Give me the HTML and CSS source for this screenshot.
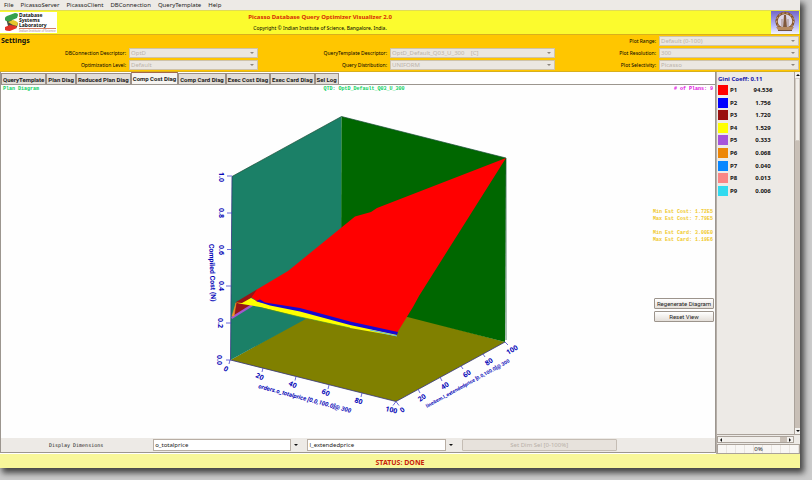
FILE: index.html
```html
<!DOCTYPE html>
<html lang="en">
<head>
<meta charset="utf-8">
<title>Picasso Database Query Optimizer Visualizer</title>
<link rel="stylesheet" href="styles.css">
</head>
<body>
<div class="window">
  <nav class="menubar">
    <button>File</button><button>PicassoServer</button><button>PicassoClient</button><button>DBConnection</button><button>QueryTemplate</button><button>Help</button>
  </nav>
  <header class="banner">
    <div class="lab">
      <svg class="lab-mark" viewBox="0 0 14 20" aria-hidden="true">
        <path d="M1 6L6 4 7 9 13 11 12 15 6 16 3 14Z" fill="#4c4a3c"/>
        <path d="M0 6Q0 5 2 4L10 1Q13 1 13 3L12 6 5 9Q1 10 0 8Z" fill="#35a04c"/>
        <path d="M3 10L8 8Q12 9 13 11L12 14 8 13Z" fill="#e6c72e"/>
        <path d="M0 15L5 13 11 14 12 16 5 19Q1 19 0 18Z" fill="#e23228"/>
      </svg>
      <div class="lab-text"><b>Database</b><b>Systems</b><b>Laboratory</b><span>Indian Institute of Science</span></div>
    </div>
    <div class="titles">
      <h1>Picasso Database Query Optimizer Visualizer 2.0</h1>
      <p>Copyright © Indian Institute of Science, Bangalore, India.</p>
    </div>
    <svg class="crest" viewBox="0 0 28 23" aria-hidden="true">
      <defs><linearGradient id="sky" x1="0" y1="0" x2="0" y2="1"><stop offset="0" stop-color="#7266c8"/><stop offset=".6" stop-color="#b4b4f4"/><stop offset="1" stop-color="#f4f4ff"/></linearGradient></defs>
      <rect width="28" height="23" fill="url(#sky)"/>
      <ellipse cx="14" cy="10" rx="8.500" ry="8" fill="#ddd6e8" stroke="#87572f" stroke-width="2.400"/>
      <ellipse cx="14" cy="10" rx="8.500" ry="8" fill="none" stroke="#d6b27e" stroke-dasharray="2 2"/>
      <path d="M13 4h2l1 13h-4z" fill="#80583c"/><path d="M11 8v8M17 8v8" stroke="#a58b83"/>
      <path d="M5 16h18l-2 3H7z" fill="#b78b62"/><path d="M7 19.500h14" stroke="#735240"/>
    </svg>
  </header>
  <section class="settings">
    <h2>Settings</h2>
    <label class="c5" for="range">Plot Range:</label><span class="combo c6"><select id="range" disabled><option>Default (0-100)</option></select></span>
    <label class="c1" for="conn">DBConnection Descriptor:</label><span class="combo"><select id="conn" disabled><option>OptD</option></select></span>
    <label for="qtd">QueryTemplate Descriptor:</label><span class="combo"><select id="qtd" disabled><option>OptD_Default_Q03_U_300 &nbsp;&nbsp; [C]</option></select></span>
    <label for="res">Plot Resolution:</label><span class="combo"><select id="res" disabled><option>300</option></select></span>
    <label class="c1" for="opt">Optimization Level:</label><span class="combo"><select id="opt" disabled><option>Default</option></select></span>
    <label for="dist">Query Distribution:</label><span class="combo"><select id="dist" disabled><option>UNIFORM</option></select></span>
    <label for="sel">Plot Selectivity:</label><span class="combo"><select id="sel" disabled><option>Picasso</option></select></span>
  </section>
  <div class="body">
    <main class="work">
      <div class="tabs" role="tablist">
        <button role="tab">QueryTemplate</button><button role="tab">Plan Diag</button><button role="tab">Reduced Plan Diag</button><button role="tab" class="active" aria-selected="true">Comp Cost Diag</button><button role="tab">Comp Card Diag</button><button role="tab">Exec Cost Diag</button><button role="tab">Exec Card Diag</button><button role="tab">Sel Log</button>
      </div>
      <div class="canvas">
        <div class="caption"><span class="green">Plan Diagram</span><span class="green">QTD: OptD_Default_Q03_U_300</span><span class="plans"># of Plans: 9</span></div>
        <div class="plot">
        <svg class="chart" viewBox="200 100 330 320" role="img" aria-label="Compiled cost surface">
          <path d="M230.500 360L341 298 505 342 396 401.500Z" fill="#808000"/>
          <path d="M232 176.500L341.500 116.500V299.500L230.500 360Z" fill="#1b8067"/>
          <path d="M341.500 116.500L506 158 505 342 341 300Z" fill="#006700"/>
          <path d="M232 176.500L341.500 116.500 506 158V340" fill="none" stroke="#174d35" stroke-width=".7"/>
          <path d="M232 176.500L230.500 360 396 401.500 505 342" fill="none" stroke="#33337e" stroke-width=".8"/>
          <path d="M506 158L377 208 371 212 355 216.500 288 271 256 290 251 297 258 302 265 303 300 309 350 323 397 333 413 307 419 296Z" fill="#ff0000"/>
          <path d="M236 302L257 289.500 251 298 243 304 252 305 234 316Z" fill="#9a1414"/>
          <path d="M231 317L251 304.500 253 306 232 319Z" fill="#a357cf"/>
          <path d="M236 303L232 316 234 316Z" fill="#ee9325" stroke="#ee9325" stroke-width=".6"/>
          <path d="M235 302.500L242 303 251 298 258 302 270 304 300 310 350 324 397 334 396 336 350 328 300 317 260 307 242 304Z" fill="#ffff00"/>
          <path d="M260 307.500L300 317 350 328" stroke="#4f8c24" stroke-width=".7" fill="none"/>
          <path d="M256 301L260 299.500 265 302.500 300 308 350 321.500 398 332 397 335 350 325 300 311.500 270 305.500 262 303Z" fill="#1608d3"/>
          <path d="M370 330L397 336" stroke="#65bce7" fill="none"/>
          <g stroke="#4545d0" stroke-width=".8"><path d="M227 176h5M227 213h5M227 249.500h5M226 286h5M226 323h5M226 360h5M230 360l-1 4M263 368l-1 4M296 376.500l-1 4M329 385l-1 4M362 393l-1 4M396 401.500l-3 4M396 401.500l3 4M418 389l2 4M440 377l2 4M461 366l2 3M483 354l2 3M505 342l3 3"/></g>
          <g class="ticks">
            <text transform="translate(219 172) rotate(90)">1.0</text><text transform="translate(219 208) rotate(90)">0.8</text><text transform="translate(219 245) rotate(90)">0.6</text><text transform="translate(219 281) rotate(90)">0.4</text><text transform="translate(218 318) rotate(90)">0.2</text><text transform="translate(217 355) rotate(90)">0.0</text>
            <text transform="translate(223 370) rotate(30)">0</text><text transform="translate(255 377) rotate(25)">20</text><text transform="translate(288 385) rotate(25)">40</text><text transform="translate(321 393) rotate(25)">60</text><text transform="translate(354 402) rotate(20)">80</text><text transform="translate(385 411) rotate(12)">100</text>
            <text transform="translate(402 413) rotate(-35)">0</text><text transform="translate(420 402) rotate(-35)">20</text><text transform="translate(443 390) rotate(-35)">40</text><text transform="translate(465 378) rotate(-35)">60</text><text transform="translate(487 366) rotate(-35)">80</text><text transform="translate(508 355) rotate(-30)">100</text>
            <text class="axis tall" transform="translate(209 244) rotate(88)">Compiled Cost (N)</text>
            <text class="axis low" transform="translate(258 388) rotate(15)">orders.o_totalprice [0.0,100.0]@ 300</text>
            <text class="axis small" transform="translate(427 408) rotate(-29)">lineitem.l_extendedprice [0.0,100.0]@ 300</text>
          </g>
        </svg>
        <aside class="facts">
          <pre>Min Est Cost: 1.72E5
Max Est Cost: 7.79E5

Min Est Card: 3.00E0
Max Est Card: 1.19E6</pre>
          <button>Regenerate Diagram</button>
          <button>Reset View</button>
        </aside>
        </div>
      </div>
      <div class="dims">
        <span class="dims-label">Display Dimensions</span>
        <span class="combo"><select aria-label="First dimension"><option>o_totalprice</option></select></span>
        <span class="combo"><select aria-label="Second dimension"><option>l_extendedprice</option></select></span>
        <button disabled>Set Dim Sel [0-100%]</button>
      </div>
    </main>
    <aside class="side">
      <div class="legend">
        <div class="legend-list">
          <h3>Gini Coeff: 0.11</h3>
          <table>
            <tr><td><i class="p1"></i></td><td>P1</td><td>94.536</td></tr>
            <tr><td><i class="p2"></i></td><td>P2</td><td>1.756</td></tr>
            <tr><td><i class="p3"></i></td><td>P3</td><td>1.720</td></tr>
            <tr><td><i class="p4"></i></td><td>P4</td><td>1.529</td></tr>
            <tr><td><i class="p5"></i></td><td>P5</td><td>0.333</td></tr>
            <tr><td><i class="p6"></i></td><td>P6</td><td>0.068</td></tr>
            <tr><td><i class="p7"></i></td><td>P7</td><td>0.040</td></tr>
            <tr><td><i class="p8"></i></td><td>P8</td><td>0.013</td></tr>
            <tr><td><i class="p9"></i></td><td>P9</td><td>0.006</td></tr>
          </table>
        </div>
        <div class="vscroll"><b class="up"></b><i></i><b class="down"></b></div>
      </div>
      <div class="hscroll"><b class="left"></b><i></i><b class="right"></b></div>
      <div class="progress">0%</div>
    </aside>
  </div>
  <footer class="status">STATUS: DONE</footer>
</div>
</body>
</html>
```
FILE: styles.css
```css
* { box-sizing: border-box; }
body {
  margin: 0;
  height: 100vh;
  padding: 0 12px 12px 0;
  background: #cbcbcb;
  font: 6px/8px "Noto Sans", sans-serif;
  color: #222;
  overflow: hidden;
}
button, select { font: inherit; color: inherit; margin: 0; }
h1, h2, h3, p, pre { margin: 0; }

.window {
  display: flex;
  flex-direction: column;
  height: 100%;
  background: #edeae6;
  box-shadow: 3px 4px 6px 1px #444;
}

.menubar { display: flex; flex: 0 0 10px; gap: 7px; padding: 1px 4px; }
.menubar button { border: 0; padding: 0; background: none; line-height: 8px; }

.banner {
  display: grid;
  flex: 0 0 24px;
  grid-template-columns: 57px 526fr 188fr 28px;
  background: #fbfb2e;
  border-top: 1px solid #e0dc55;
  padding-right: 1px;
}
.lab { display: flex; margin-top: 1px; height: 21px; background: #fff; padding-left: 5px; }
.lab-mark { width: 14px; height: 20px; }
.lab-text { display: flex; flex-direction: column; color: #111; padding-top: 1px; white-space: nowrap; }
.lab-text b { font-size: 5px; line-height: 5px; }
.lab-text span { border-top: 1px solid #d37f68; font-size: 3px; line-height: 4px; color: #a88; }
.titles { text-align: center; }
.titles h1 { font-size: 6px; line-height: 12px; color: #d62b05; }
.titles p { font-size: 5px; line-height: 11px; color: #000; }
.crest { grid-column: 4; width: 28px; height: 23px; }

.settings {
  display: grid;
  flex: 0 0 38px;
  grid-template-columns: 128fr 129fr 132fr 165fr 104fr 140fr;
  grid-auto-rows: 10px;
  row-gap: 2px;
  padding: 1px 1px 0;
  background: #ffc600;
  border: solid #d9b01c;
  border-width: 1px 0;
}
.settings h2 { font: bold 7px/10px "Noto Sans", sans-serif; color: #111; }
.settings label { text-align: right; padding-right: 3px; font-size: 5px; line-height: 10px; color: #000; white-space: nowrap; }
.settings .c5 { grid-column: 5; }
.settings .c1 { grid-column: 1; }

.combo { position: relative; display: block; min-width: 0; }
.combo select {
  appearance: none;
  display: block;
  width: 100%;
  height: 100%;
  padding: 0 1px;
  border: 1px solid #b8aea4;
  border-radius: 0;
  background: #ebe7e1;
  line-height: 8px;
}
.combo select:disabled { color: #bcb4aa; opacity: 1; border-color: #cfc3a8; }
.combo::after {
  content: "";
  position: absolute;
  right: 4px;
  top: 4px;
  border: 2px solid transparent;
  border-top-color: #8d857c;
  border-bottom: 0;
}

.body { display: flex; flex: 1 1 0; min-height: 0; background: #fff; }
.work { display: flex; flex: 1 1 0; flex-direction: column; min-width: 0; border: solid #9c968f; border-width: 0 1px 1px; margin-bottom: 1px; }

.tabs { display: flex; flex: 0 0 13px; align-items: flex-end; border-bottom: 1px solid #9c968f; }
.tabs button {
  height: 11px;
  padding: 0 1px;
  border: 1px solid #9c8f86;
  border-bottom: 0;
  background: #e2ddd7;
  font-family: Roboto, sans-serif;
  font-weight: bold;
  line-height: 9px;
  color: #222;
  white-space: nowrap;
}
.tabs .active { height: 12px; background: #f6f4f1; border-top-color: #a3674b; }

.canvas { display: flex; flex-direction: column; flex: 1 1 0; min-height: 0; background: #fefefe; }
.caption { display: grid; grid-template-columns: 322fr auto 310fr; padding: 0 2px; font: bold 5px/8px "Liberation Mono", monospace; }
.green { color: #0bd05d; }
.plans { text-align: right; color: #e00be0; }
.plot { display: flex; flex: 1 1 0; min-height: 0; justify-content: flex-end; }
.chart { width: 330px; height: 320px; margin-top: 7px; }
.ticks { fill: #0808b8; font: bold 7px "Noto Sans", sans-serif; }
.ticks .axis { font: bold 6px Roboto, sans-serif; }
.ticks .low { font-style: italic; }
.ticks .small { font-size: 5px; }
.ticks .tall { font-size: 7px; }
.facts { flex: 0 1 185px; display: flex; flex-direction: column; align-items: flex-end; padding: 116px 1px 0 0; }
.facts pre { font: bold 5px/7px "Liberation Mono", monospace; color: #f0c828; margin: 0 1px 54px 0; }
.facts button, .dims button {
  width: 60px;
  height: 11px;
  margin-bottom: 2px;
  padding: 0;
  border: 1px solid #9c948c;
  border-radius: 1px;
  background: linear-gradient(#fff, #e4dfd9);
  font: 6px/9px Roboto, sans-serif;
  white-space: nowrap;
}

.dims { display: grid; flex: 0 0 14px; grid-template-columns: 146fr 148fr 148fr 155fr 92fr; gap: 0 6px; padding: 1px 0; background: #edeae6; }
.dims-label { text-align: center; padding-left: 4px; line-height: 12px; font-family: "DejaVu Sans Mono", monospace; font-size: 5px; }
.dims .combo { padding-right: 10px; }
.dims select { background: #fff; color: #222; }
.dims .combo::after { right: 3px; top: 5px; border-top-color: #111; }
.dims button { width: 100%; height: 12px; margin: 0; background: #e7e2dc; border-color: #c5bdb4; color: #b8b0a8; font-family: "Noto Sans", sans-serif; }

.side { display: flex; flex: 0 0 84px; flex-direction: column; background: #edeae6; border-left: 1px solid #b5aea7; }
.legend { display: flex; flex: 1 1 0; min-height: 0; border-bottom: 1px solid #aaa29a; }
.legend-list { flex: 1; padding: 3px 1px; }
.legend h3 { font-size: 6px; line-height: 9px; color: #1616a8; }
.legend table { table-layout: fixed; border-collapse: collapse; width: 60px; height: 113px; font-weight: bold; color: #111; }
.legend td { padding: 0; width: 12px; line-height: 12px; }
.legend td + td { width: 18px; }
.legend td + td + td { width: 30px; text-align: center; }
.legend td i { display: block; width: 10px; height: 10px; }
.p1 { background: #ff0000; } .p2 { background: #0000ff; } .p3 { background: #991010; }
.p4 { background: #ffff00; } .p5 { background: #a653db; } .p6 { background: #ed8606; }
.p7 { background: #0786ff; } .p8 { background: #fa8585; } .p9 { background: #31daef; }
.vscroll, .hscroll { display: flex; background: #c8bfb6; }
.vscroll { flex: 0 0 6px; flex-direction: column; border-left: 1px solid #aaa29a; }
.vscroll i { height: 63px; background: #f1eeea; border: 1px solid #d3ccc4; }
.vscroll b, .hscroll b { display: grid; place-items: center; flex: 0 0 6px; background: #f3f1ee; }
.vscroll b::before, .hscroll b::before { content: ""; border: 2px solid transparent; }
.vscroll .up::before { border-top: 0; border-bottom-color: #111; }
.vscroll .down { margin-top: auto; }
.vscroll .down::before { border-bottom: 0; border-top-color: #111; }
.hscroll { flex: 0 0 7px; margin: 1px 6px 1px 0; border: 1px solid #aaa29a; }
.hscroll i { flex: 0 1 56px; background: #f1eeea; }
.hscroll .left::before { border-left: 0; border-right-color: #111; }
.hscroll .right { margin-left: auto; }
.hscroll .right::before { border-right: 0; border-left-color: #111; }
.progress { flex: 0 0 10px; text-align: center; border: 1px solid #aaa29a; background: repeating-linear-gradient(90deg, #f8f6f4 0 8px, #e8e4e0 8px 9px); }

.status { flex: 0 0 14px; padding-top: 4px; background: #f8f79a; color: #c8230a; text-align: center; font: bold 7px/10px "Noto Sans", sans-serif; }
```
